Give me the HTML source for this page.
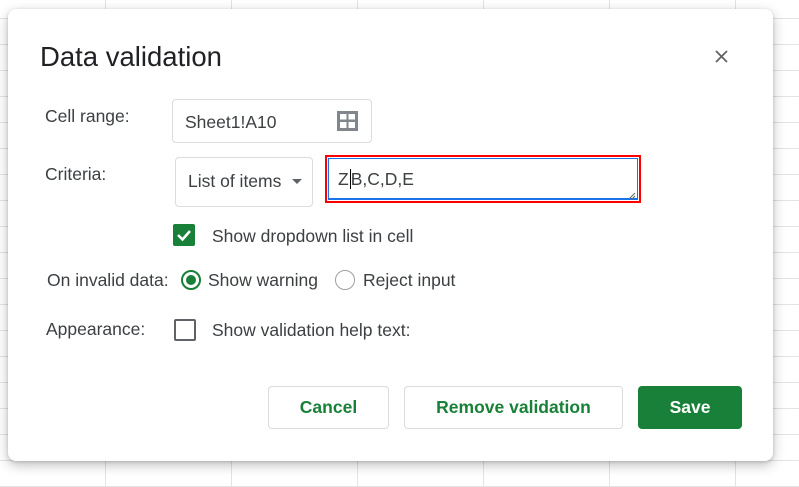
<!DOCTYPE html>
<html><head><style>
body{margin:0;width:799px;height:487px;overflow:hidden;font-family:"Liberation Sans",sans-serif;color:#3c4043;
background-color:#fff;
background-image:linear-gradient(#e2e3e3 1px,transparent 1px),linear-gradient(90deg,#e2e3e3 1px,transparent 1px);
background-size:126px 26px;background-position:0 18px,105px 0;}
.dlg{position:absolute;left:8px;top:9px;width:765px;height:452px;background:#fff;border-radius:8px;box-shadow:0 4px 12px rgba(0,0,0,.25),0 1px 3px rgba(0,0,0,.15);}
.a{position:absolute;font-size:17.5px;white-space:nowrap}
.box{position:absolute;border:1px solid #dadce0;border-radius:4px;background:#fff}
.btn{position:absolute;top:377px;height:43px;border:1px solid #dadce0;border-radius:4px;color:#188038;font-size:17.5px;font-weight:bold;display:flex;align-items:center;justify-content:center;box-sizing:border-box}
</style></head><body>
<div class="dlg">
<div class="a" style="left:32px;top:32px;font-size:27.5px;color:#202124">Data validation</div>
<svg style="position:absolute;left:707px;top:41px" width="13" height="13"><path d="M1 1L12 12M12 1L1 12" stroke="#5f6368" stroke-width="1.8"/></svg>
<div class="a" style="left:37px;top:97px">Cell range:</div>
<div class="box" style="left:164px;top:90px;width:198px;height:42px"></div>
<div class="a" style="left:177px;top:103px;color:#3c4043">Sheet1!A10</div>
<svg style="position:absolute;left:329px;top:102px" width="21" height="20"><rect x="0" y="0" width="21" height="20" fill="#80868b"/><rect x="3" y="3" width="6.5" height="5.5" fill="#fff"/><rect x="11.5" y="3" width="6.5" height="5.5" fill="#fff"/><rect x="3" y="11" width="6.5" height="6" fill="#fff"/><rect x="11.5" y="11" width="6.5" height="6" fill="#fff"/></svg>
<div class="a" style="left:37px;top:155px">Criteria:</div>
<div class="box" style="left:167px;top:148px;width:136px;height:48px"></div>
<div class="a" style="left:180px;top:162px">List of items</div>
<svg style="position:absolute;left:284px;top:170px" width="10" height="5"><path d="M0 0L10 0L5 5Z" fill="#5f6368"/></svg>
<div style="position:absolute;left:317px;top:146px;width:316px;height:48px;border:2px solid #f00;box-sizing:border-box"></div>
<div style="position:absolute;left:320px;top:149px;width:310px;height:42px;border:1px solid #1a73e8;border-bottom:2px solid #1a73e8;box-sizing:border-box;background:#fff"></div>
<div class="a" style="left:330px;top:160px;color:#3c4043">Z<span style="border-left:1px solid #000;margin-left:1px"></span>B,C,D,E</div>
<svg style="position:absolute;left:620px;top:183px" width="8" height="8"><path d="M1 7L7 1M4 7L7 4" stroke="#666" stroke-width="1"/></svg>
<div style="position:absolute;left:165px;top:215px;width:22px;height:22px;background:#188038;border-radius:2px"></div>
<svg style="position:absolute;left:165px;top:215px" width="22" height="22"><path d="M5 11L9.5 15.5L17 7" stroke="#fff" stroke-width="2.5" fill="none"/></svg>
<div class="a" style="left:204px;top:217px">Show dropdown list in cell</div>
<div class="a" style="left:39px;top:261px">On invalid data:</div>
<div style="position:absolute;left:173px;top:261px;width:16px;height:16px;border:2px solid #188038;border-radius:50%"></div>
<div style="position:absolute;left:178px;top:266px;width:10px;height:10px;background:#188038;border-radius:50%"></div>
<div class="a" style="left:200px;top:261px">Show warning</div>
<div style="position:absolute;left:327px;top:261px;width:18px;height:18px;border:1px solid #9aa0a6;border-radius:50%"></div>
<div class="a" style="left:355px;top:261px">Reject input</div>
<div class="a" style="left:38px;top:310px">Appearance:</div>
<div style="position:absolute;left:166px;top:310px;width:18px;height:18px;border:2px solid #5f6368;border-radius:2px"></div>
<div class="a" style="left:204px;top:311px">Show validation help text:</div>
<div class="btn" style="left:260px;width:121px">Cancel</div>
<div class="btn" style="left:396px;width:219px">Remove validation</div>
<div class="btn" style="left:630px;width:104px;background:#188038;border-color:#188038;color:#fff">Save</div>
</div>
</body></html>
